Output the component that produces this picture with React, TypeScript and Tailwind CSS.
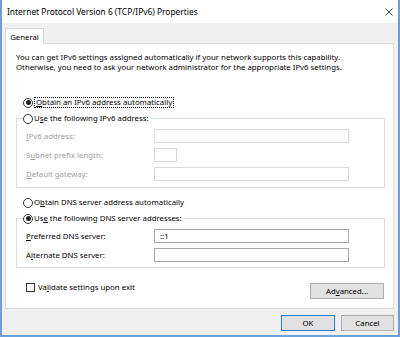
import { ReactNode } from 'react';

function Radio({ checked = false, children }: { checked?: boolean; children: ReactNode }) {
  return (
    <span className="flex h-[11px] items-center gap-[1px] leading-[11px]">
      <span className="flex h-[10px] w-[10px] shrink-0 items-center justify-center rounded-full border border-[#333333] bg-white">
        {checked && <span className="h-[5px] w-[5px] rounded-full bg-[#222222]" />}
      </span>
      {children}
    </span>
  );
}

function Field({
  label,
  value = '',
  disabled = false,
  short = false,
}: {
  label: ReactNode;
  value?: string;
  disabled?: boolean;
  short?: boolean;
}) {
  return (
    <div className="flex items-center pl-[9px]">
      <span className={disabled ? 'w-[128px] text-[#a0a0a0]' : 'w-[128px] text-black'}>{label}</span>
      <div
        className={
          (short ? 'w-[23px] ' : 'w-[195px] ') +
          (disabled ? 'border-[#d9d9d9] ' : 'border-[#a6a6a6] ') +
          'flex h-[14px] items-center border bg-white pl-[5px]'
        }
      >
        {value}
      </div>
    </div>
  );
}

function DialogButton({ children, primary = false, wide = false }: { children: ReactNode; primary?: boolean; wide?: boolean }) {
  return (
    <div
      className={
        (wide ? 'w-[74px] ' : primary ? 'w-[54px] ' : 'w-[53px] ') +
        (primary ? 'border-[#2b7fd3] ' : 'border-[#adadad] ') +
        'flex h-[16px] items-center justify-center border bg-[#e1e1e1]'
      }
    >
      {children}
    </div>
  );
}

export default function App() {
  return (
    <div className="flex h-[337px] w-[400px] flex-col border-x-2 border-b-2 border-[#6a9fd9] bg-[#f0f0f0] font-['Noto_Sans',sans-serif] text-[7.8px] leading-[10px] text-black">
      <div className="flex h-[23px] shrink-0 items-center justify-between bg-white pl-[5px] pr-[5px]">
        <span className="text-[8.4px]">Internet Protocol Version 6 (TCP/IPv6) Properties</span>
        <svg width="8" height="8" viewBox="0 0 8 8" className="text-[#333333]">
          <path d="M0.5 0.5 L7.5 7.5 M7.5 0.5 L0.5 7.5" stroke="currentColor" strokeWidth="0.9" fill="none" />
        </svg>
      </div>

      <div className="pl-[3px] pr-[4px] pt-[5px]">
        <div className="relative z-10 -mb-px flex h-[16px] w-[39px] items-center justify-center border-x border-t border-[#d9d9d9] bg-white">
          General
        </div>
        <div className="h-[266px] border border-[#d9d9d9] bg-white pl-[10px] pr-[8px] pt-[8px]">
          <p>
            You can get IPv6 settings assigned automatically if your network supports this capability.
            <br />
            Otherwise, you need to ask your network administrator for the appropriate IPv6 settings.
          </p>

          <div className="ml-[7px] mt-[25px]">
            <Radio checked>
              <span className="border border-dotted border-black px-px leading-[9px]">
                <u>O</u>btain an IPv6 address automatically
              </span>
            </Radio>
          </div>

          <fieldset className="mt-[5px] border border-[#dcdcdc] pb-[6px]">
            <legend className="ml-[6px] pr-[2px]">
              <Radio>
                <span>
                  U<u>s</u>e the following IPv6 address:
                </span>
              </Radio>
            </legend>
            <div className="flex flex-col gap-[5px] pt-[5px]">
              <Field disabled label={<><u>I</u>Pv6 address:</>} />
              <Field disabled short label={<>S<u>u</u>bnet prefix length:</>} />
              <Field disabled label={<><u>D</u>efault gateway:</>} />
            </div>
          </fieldset>

          <div className="ml-[7px] mt-[9px]">
            <Radio>
              <span>
                O<u>b</u>tain DNS server address automatically
              </span>
            </Radio>
          </div>

          <fieldset className="mt-[5px] border border-[#dcdcdc] pb-[5px]">
            <legend className="ml-[6px] pr-[2px]">
              <Radio checked>
                <span>
                  Us<u>e</u> the following DNS server addresses:
                </span>
              </Radio>
            </legend>
            <div className="flex flex-col gap-[5px] pt-[5px]">
              <Field label={<><u>P</u>referred DNS server:</>} value="::1" />
              <Field label={<>A<u>l</u>ternate DNS server:</>} />
            </div>
          </fieldset>

          <div className="mt-[15px] flex items-start justify-between pr-[1px]">
            <div className="ml-[10px] flex items-center gap-[3px] leading-[9px]">
              <span className="h-[9px] w-[9px] border border-[#333333] bg-white" />
              <span>
                Va<u>l</u>idate settings upon exit
              </span>
            </div>
            <DialogButton wide>
              <span>
                Ad<u>v</u>anced...
              </span>
            </DialogButton>
          </div>
        </div>
      </div>

      <div className="mt-[6px] flex justify-end gap-[6px] pr-[4px]">
        <DialogButton primary>OK</DialogButton>
        <DialogButton>Cancel</DialogButton>
      </div>
    </div>
  );
}
